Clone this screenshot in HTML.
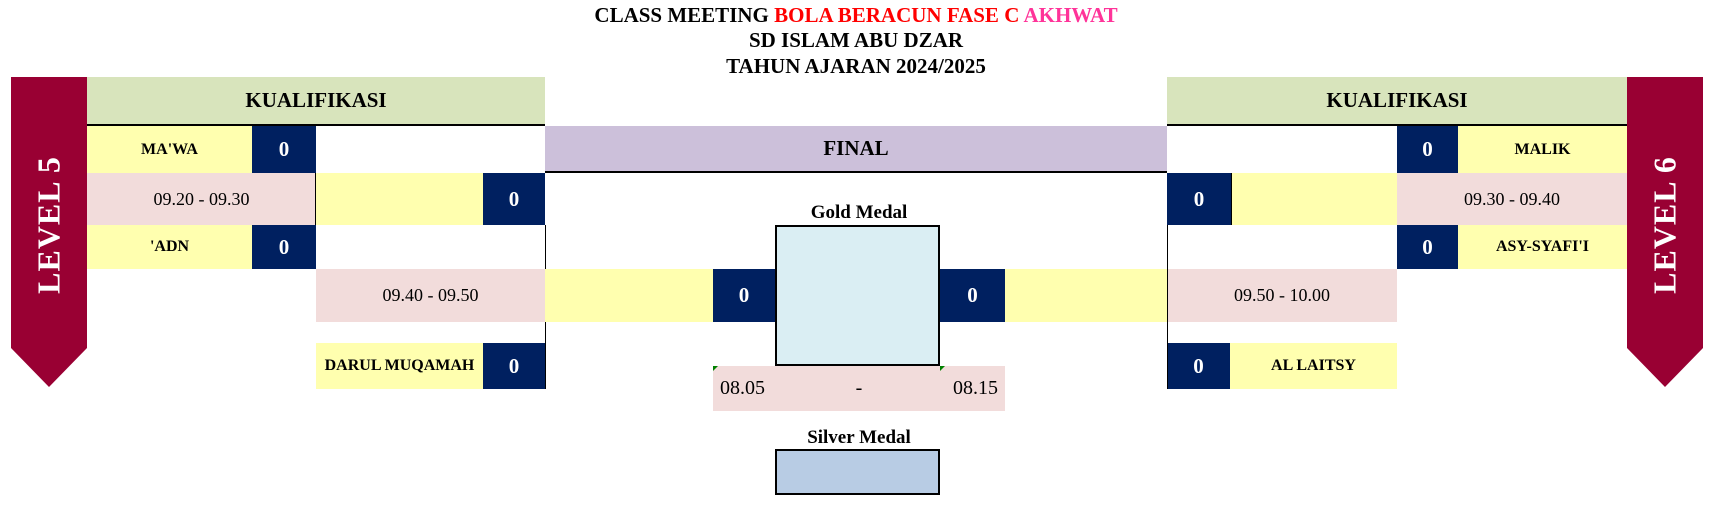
<!DOCTYPE html>
<html><head><meta charset="utf-8"><style>
body{margin:0;width:1712px;height:510px;background:#fff;position:relative;overflow:hidden;font-family:"Liberation Serif",serif}
.a{position:absolute;display:flex;align-items:center;justify-content:center;box-sizing:border-box;white-space:nowrap}
.y{background:#ffffaf}.p{background:#f2dcdb}.s{background:#002060;color:#fff;font-weight:bold;font-size:21px}
.g{background:#d8e4bc;font-weight:bold;font-size:21px}
.n{font-weight:bold;font-size:16px}.t{font-size:18px}
.t1{position:absolute;left:0;width:1712px;text-align:center;font-weight:bold;font-size:21px;line-height:26px}
.vl{position:absolute;width:1px;background:#000}
.ban{position:absolute;top:77px;width:76px;height:310px;background:#990033;clip-path:polygon(0 0,100% 0,100% 271px,50% 310px,0 271px)}
.bt{position:absolute;color:#fff;font-weight:bold;font-size:32px;white-space:nowrap;letter-spacing:1px}
</style></head><body>
<div class="t1" style="top:2px">CLASS MEETING <span style="color:#ff0000">BOLA BERACUN FASE C </span><span style="color:#ff3399">AKHWAT</span></div>
<div class="t1" style="top:27px">SD ISLAM ABU DZAR</div>
<div class="t1" style="top:53px">TAHUN AJARAN 2024/2025</div>

<div class="ban" style="left:11px"></div>
<div class="bt" style="left:49px;top:225px;transform:translate(-50%,-50%) rotate(-90deg)">LEVEL 5</div>
<div class="ban" style="left:1627px"></div>
<div class="bt" style="left:1665px;top:225px;transform:translate(-50%,-50%) rotate(-90deg)">LEVEL 6</div>

<div class="a g" style="left:87px;top:77px;width:458px;height:49px;border-bottom:2px solid #000">KUALIFIKASI</div>
<div class="a g" style="left:1167px;top:77px;width:460px;height:49px;border-bottom:2px solid #000">KUALIFIKASI</div>
<div class="a" style="left:545px;top:126px;width:622px;height:47px;background:#ccc0da;border-bottom:2px solid #000;font-weight:bold;font-size:21px">FINAL</div>

<!-- left -->
<div class="a y n" style="left:87px;top:126px;width:165px;height:47px">MA'WA</div>
<div class="a s" style="left:252px;top:126px;width:64px;height:47px">0</div>
<div class="a p t" style="left:87px;top:173px;width:229px;height:52px">09.20 - 09.30</div>
<div class="a y" style="left:316px;top:173px;width:167px;height:52px"></div>
<div class="a s" style="left:483px;top:173px;width:62px;height:52px">0</div>
<div class="a y n" style="left:87px;top:225px;width:165px;height:44px">'ADN</div>
<div class="a s" style="left:252px;top:225px;width:64px;height:44px">0</div>
<div class="a p t" style="left:316px;top:269px;width:229px;height:53px">09.40 - 09.50</div>
<div class="a y n" style="left:316px;top:343px;width:167px;height:46px">DARUL MUQAMAH</div>
<div class="a s" style="left:483px;top:343px;width:62px;height:46px">0</div>
<div class="vl" style="left:315px;top:173px;height:52px"></div>
<div class="vl" style="left:545px;top:225px;height:164px"></div>

<!-- center -->
<div class="a y" style="left:545px;top:269px;width:168px;height:53px"></div>
<div class="a s" style="left:713px;top:269px;width:62px;height:53px">0</div>
<div class="a s" style="left:940px;top:269px;width:65px;height:53px">0</div>
<div class="a y" style="left:1005px;top:269px;width:162px;height:53px"></div>
<div class="a" style="left:713px;top:202px;width:292px;height:22px;font-weight:bold;font-size:19px">Gold Medal</div>
<div class="a" style="left:775px;top:225px;width:165px;height:141px;background:#daeef3;border:2px solid #000"></div>
<div class="a p" style="left:713px;top:366px;width:292px;height:45px;font-size:20px;justify-content:space-between;padding:0 7px"><span>08.05</span><span>-</span><span>08.15</span></div>
<div style="position:absolute;left:713px;top:366px;width:0;height:0;border-top:5px solid #008000;border-right:5px solid transparent"></div>
<div style="position:absolute;left:940px;top:366px;width:0;height:0;border-top:5px solid #008000;border-right:5px solid transparent"></div>
<div class="a" style="left:713px;top:427px;width:292px;height:22px;font-weight:bold;font-size:19px">Silver Medal</div>
<div class="a" style="left:775px;top:449px;width:165px;height:46px;background:#b8cce4;border:2px solid #000"></div>

<!-- right -->
<div class="a s" style="left:1397px;top:126px;width:61px;height:47px">0</div>
<div class="a y n" style="left:1458px;top:126px;width:169px;height:47px">MALIK</div>
<div class="a s" style="left:1167px;top:173px;width:64px;height:52px">0</div>
<div class="a y" style="left:1231px;top:173px;width:166px;height:52px;border-left:1px solid #000"></div>
<div class="a p t" style="left:1397px;top:173px;width:230px;height:52px">09.30 - 09.40</div>
<div class="a s" style="left:1397px;top:225px;width:61px;height:44px">0</div>
<div class="a y n" style="left:1458px;top:225px;width:169px;height:44px">ASY-SYAFI'I</div>
<div class="a p t" style="left:1167px;top:269px;width:230px;height:53px">09.50 - 10.00</div>
<div class="a s" style="left:1167px;top:343px;width:63px;height:46px">0</div>
<div class="a y n" style="left:1230px;top:343px;width:167px;height:46px">AL LAITSY</div>
<div class="vl" style="left:1167px;top:225px;height:164px"></div>
</body></html>
